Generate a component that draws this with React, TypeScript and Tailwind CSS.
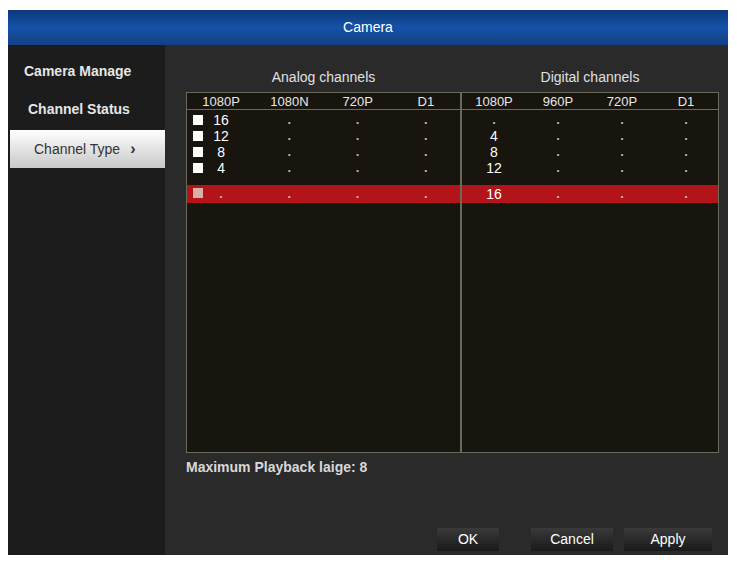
const analogRows = [
  ["16", ".", ".", "."],
  ["12", ".", ".", "."],
  ["8", ".", ".", "."],
  ["4", ".", ".", "."],
  [".", ".", ".", "."],
];
const digitalRows = [
  [".", ".", ".", "."],
  ["4", ".", ".", "."],
  ["8", ".", ".", "."],
  ["12", ".", ".", "."],
  ["16", ".", ".", "."],
];

function Half({ heads, rows, checks }: { heads: string[]; rows: string[][]; checks?: boolean }) {
  return (
    <div className="flex-1 flex flex-col">
      <div className="grid grid-cols-4 h-[17px] border-b border-[#6a6a5a] text-[13px] leading-[17px] text-[#e8e8e8] text-center">
        {heads.map((h, i) => (
          <div key={i}>{h}</div>
        ))}
      </div>
      <div className="pt-[2px]">
        {rows.map((r, i) => {
          const sel = i === 4;
          return (
            <div
              key={i}
              className={`relative grid grid-cols-4 text-[14px] text-white text-center ${
                sel ? "bg-[#b3141a] h-[18px] leading-[18px] mt-[9px]" : "h-[16px] leading-[16px]"
              }`}
            >
              {checks && (
                <div className={`absolute left-[6px] top-[3px] w-[10px] h-[10px] ${sel ? "bg-[#d8b0a8]" : "bg-white"}`} />
              )}
              {r.map((c, j) => (
                <div key={j} className={c === "." ? "text-[#bbb] text-[13px] font-bold" : ""}>
                  {c}
                </div>
              ))}
            </div>
          );
        })}
      </div>
    </div>
  );
}

export default function App() {
  return (
    <div className="w-[737px] h-[562px] bg-white pt-[10px] pl-[8px]" style={{ fontFamily: "'Liberation Sans', Arial, sans-serif" }}>
      <div className="w-[720px] h-[545px] flex flex-col bg-[#2a2a2a]">
        {/* ================= TITLE ================= */}
        <div className="h-[35px] bg-gradient-to-b from-[#0b3a7a] via-[#1552a6] to-[#123f86] text-white text-center text-[14px] leading-[35px]">
          Camera
        </div>
        <div className="flex flex-1">
          {/* ================= SIDEBAR ================= */}
          <div className="w-[157px] bg-[#1c1c1c] pt-[16px] text-[14px] font-bold text-[#e6e6e6]">
            <div className="h-[38px] pl-[16px] leading-[20px]">Camera Manage</div>
            <div className="h-[38px] pl-[20px] leading-[20px]">Channel Status</div>
            <div className="h-[38px] ml-[2px] -mt-[7px] bg-gradient-to-b from-white to-[#c8c8c8] text-[#333] font-normal leading-[38px] pl-[24px] flex items-center gap-[10px]">
              Channel Type <span className="font-bold text-[16px]">›</span>
            </div>
          </div>
          {/* ================= MAIN ================= */}
          <div className="flex-1 flex flex-col pl-[21px] pr-[6px] pt-[22px]">
            <div className="flex text-[14px] text-[#e0e0e0] h-[25px] w-[533px]">
              <div className="w-[275px] text-center">Analog channels</div>
              <div className="flex-1 text-center">Digital channels</div>
            </div>
            <div className="w-[533px] h-[361px] border border-[#6a6a5a] bg-[#18140e] flex">
              <div className="w-[275px] border-r-2 border-[#6a6a5a] flex">
                <Half heads={["1080P", "1080N", "720P", "D1"]} rows={analogRows} checks />
              </div>
              <Half heads={["1080P", "960P", "720P", "D1"]} rows={digitalRows} />
            </div>
            <div className="mt-[4px] text-[14px] font-bold text-[#d8d8d8]">Maximum Playback laige: 8</div>
            <div className="flex mt-[50px] pl-[251px] text-[14px] text-white">
              <div className="w-[62px] h-[23px] bg-gradient-to-b from-[#3a3a3a] to-[#1a1a1a] text-center leading-[23px]">OK</div>
              <div className="w-[82px] h-[23px] ml-[32px] bg-gradient-to-b from-[#3a3a3a] to-[#1a1a1a] text-center leading-[23px]">Cancel</div>
              <div className="w-[88px] h-[23px] ml-[11px] bg-gradient-to-b from-[#3a3a3a] to-[#1a1a1a] text-center leading-[23px]">Apply</div>
            </div>
          </div>
        </div>
      </div>
    </div>
  );
}
